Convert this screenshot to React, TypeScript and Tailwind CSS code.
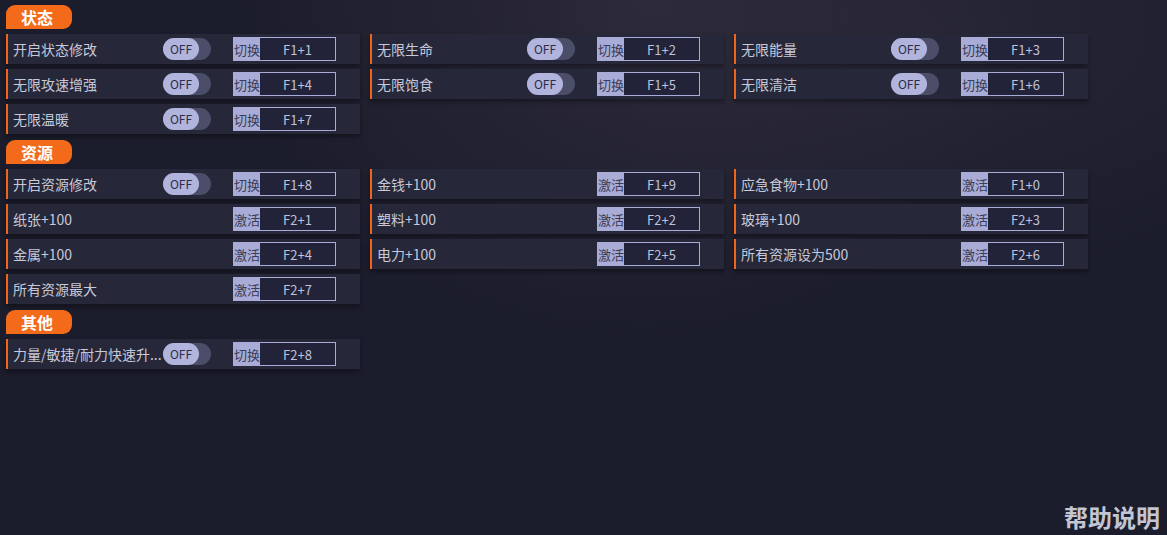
import React from 'react';

type Item = { label: string; toggle?: boolean; action: string; key: string };

const SECTIONS: { title: string; items: Item[] }[] = [
  {
    title: '状态',
    items: [
      { label: '开启状态修改', toggle: true, action: '切换', key: 'F1+1' },
      { label: '无限生命', toggle: true, action: '切换', key: 'F1+2' },
      { label: '无限能量', toggle: true, action: '切换', key: 'F1+3' },
      { label: '无限攻速增强', toggle: true, action: '切换', key: 'F1+4' },
      { label: '无限饱食', toggle: true, action: '切换', key: 'F1+5' },
      { label: '无限清洁', toggle: true, action: '切换', key: 'F1+6' },
      { label: '无限温暖', toggle: true, action: '切换', key: 'F1+7' },
    ],
  },
  {
    title: '资源',
    items: [
      { label: '开启资源修改', toggle: true, action: '切换', key: 'F1+8' },
      { label: '金钱+100', action: '激活', key: 'F1+9' },
      { label: '应急食物+100', action: '激活', key: 'F1+0' },
      { label: '纸张+100', action: '激活', key: 'F2+1' },
      { label: '塑料+100', action: '激活', key: 'F2+2' },
      { label: '玻璃+100', action: '激活', key: 'F2+3' },
      { label: '金属+100', action: '激活', key: 'F2+4' },
      { label: '电力+100', action: '激活', key: 'F2+5' },
      { label: '所有资源设为500', action: '激活', key: 'F2+6' },
      { label: '所有资源最大', action: '激活', key: 'F2+7' },
    ],
  },
  {
    title: '其他',
    items: [
      { label: '力量/敏捷/耐力快速升...', toggle: true, action: '切换', key: 'F2+8' },
    ],
  },
];

const FONT = { fontFamily: '"Noto Sans CJK SC", "Noto Sans", sans-serif' };

function Toggle() {
  return (
    <div className="w-[48px] h-[22px] rounded-full bg-[#4b4d69] flex shrink-0">
      <div className="w-[36px] h-[22px] rounded-full bg-[#b1b5de] flex items-center justify-center text-[12px] text-[#2c2e48]">
        OFF
      </div>
    </div>
  );
}

function Row({ item }: { item: Item }) {
  return (
    <div className="h-[30px] w-[354px] bg-[#262739] border-l-2 border-[#f0641c] pl-[5px] flex items-center shadow-[0_3px_4px_rgba(0,0,0,0.35)]">
      <div className="w-[150px] shrink-0 whitespace-nowrap text-[14px] text-[#c6c9da] leading-[30px]">{item.label}</div>
      <div className="w-[48px] shrink-0">{item.toggle && <Toggle />}</div>
      <div className="ml-[22px] w-[103px] h-[24px] flex border border-[#a8acd6] bg-[#222338]">
        <div className="w-[26px] bg-[#a8acd6] text-[13px] text-[#3a3c58] flex items-center justify-center leading-none">
          {item.action}
        </div>
        <div className="flex-1 flex items-center justify-center text-[13px] text-[#bfc2dc] leading-none">
          {item.key}
        </div>
      </div>
    </div>
  );
}

export default function App() {
  return (
    <div
      className="w-[1167px] h-[535px] overflow-hidden flex flex-col bg-[#1c1d2c] bg-[radial-gradient(ellipse_at_55%_0%,rgba(70,60,75,0.35),transparent_45%),radial-gradient(ellipse_at_80%_5%,rgba(60,55,70,0.3),transparent_35%)]"
      style={FONT}
    >
      <div className="pl-[6px] pt-[5px] flex flex-col gap-[6px]">
        {SECTIONS.map(s => (
          <div key={s.title} className="flex flex-col gap-[5px]">
            <div className="w-[66px] h-[24px] bg-[#f26a1a] rounded-tl-[9px] rounded-tr-[9px] rounded-br-[9px] flex items-center pl-[15px] text-[16px] font-bold text-white leading-none">
              {s.title}
            </div>
            <div className="grid grid-cols-[354px_354px_354px] gap-x-[10px] gap-y-[5px]">
              {s.items.map(it => (
                <Row key={it.key} item={it} />
              ))}
            </div>
          </div>
        ))}
      </div>
      <div className="mt-auto self-end pr-[7px] pb-[4px] text-[24px] font-bold text-[#c2c5d2] leading-[28px]">
        帮助说明
      </div>
    </div>
  );
}
